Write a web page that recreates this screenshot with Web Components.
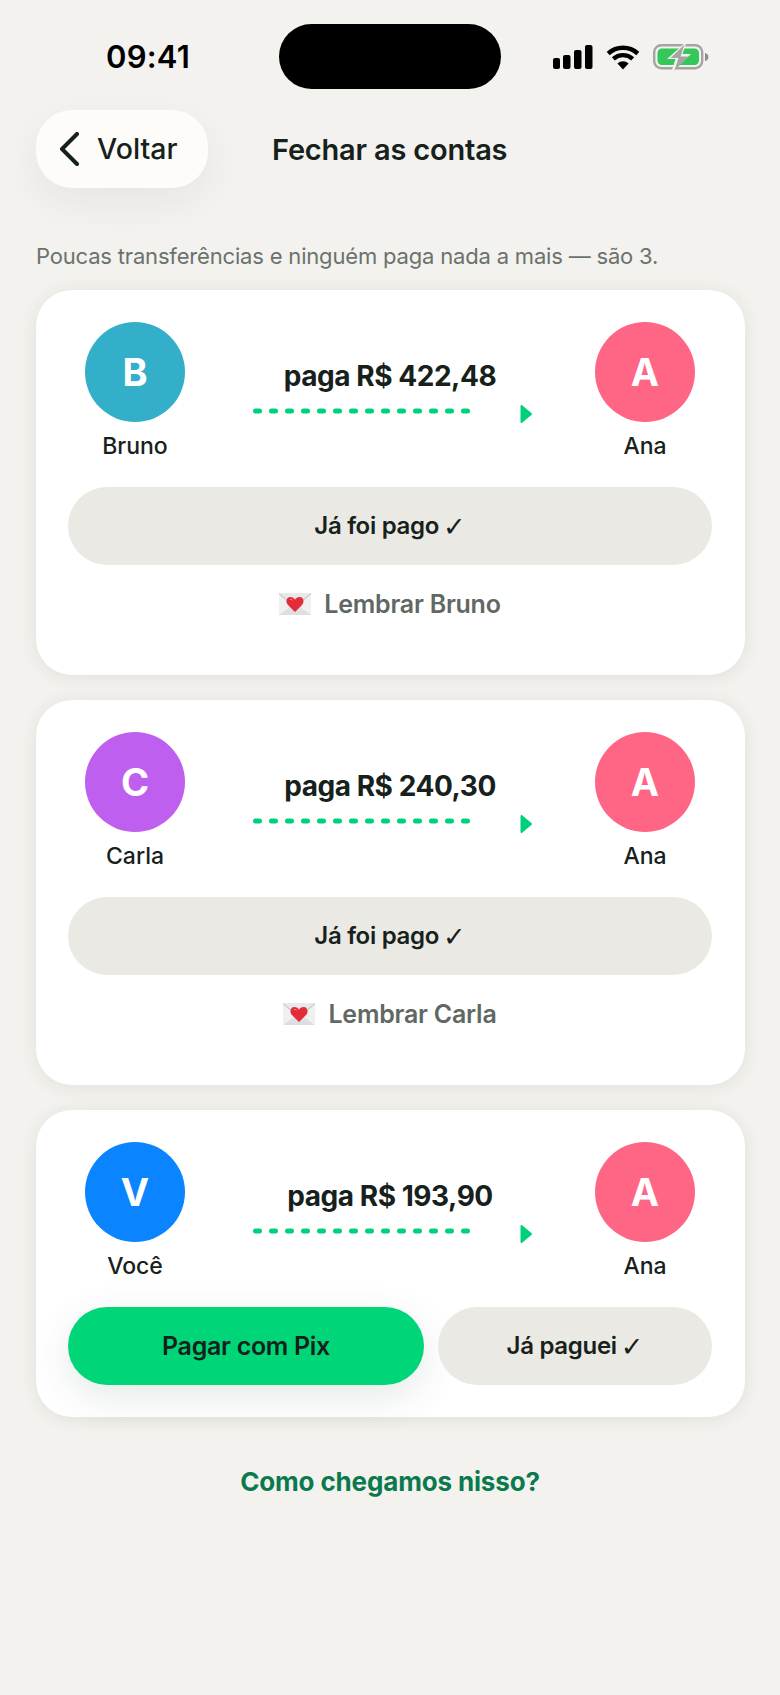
<!DOCTYPE html>
<html lang="pt-BR">
<head>
<meta charset="utf-8">
<title>Fechar as contas</title>
<style>
  html, body { margin: 0; padding: 0; background: #f3f2ee; }
  body { width: 780px; height: 1695px; overflow: hidden; font-family: Inter, "Liberation Sans", sans-serif; color: #17211c; }
</style>
</head>
<body>
<app-screen>
  <status-bar></status-bar>
  <top-nav title-text="Fechar as contas" back="Voltar"></top-nav>
  <p-intro>Poucas transferências e ninguém paga nada a mais — são 3.</p-intro>
  <transfer-card from="Bruno" initial="B" color="#33afca" amount="paga R$ 422,48">
    <pill-button>Já foi pago<check-mark></check-mark></pill-button>
    <remind-link>Lembrar Bruno</remind-link>
  </transfer-card>
  <transfer-card from="Carla" initial="C" color="#bf5ff0" amount="paga R$ 240,30">
    <pill-button>Já foi pago<check-mark></check-mark></pill-button>
    <remind-link>Lembrar Carla</remind-link>
  </transfer-card>
  <transfer-card from="Você" initial="V" color="#0a84ff" amount="paga R$ 193,90">
    <action-row>
      <pill-button primary style="flex:356 1 0">Pagar com Pix</pill-button>
      <pill-button style="flex:274 1 0">Já paguei<check-mark></check-mark></pill-button>
    </action-row>
  </transfer-card>
  <how-link>Como chegamos nisso?</how-link>
</app-screen>

<script>
function shadow(el, html) { el.attachShadow({ mode: 'open' }).innerHTML = html; }
function def(name, render) {
  customElements.define(name, class extends HTMLElement {
    connectedCallback() { if (!this.shadowRoot) shadow(this, render(this)); }
  });
}

def('app-screen', () => `<style>:host{display:block;width:780px;height:1695px;box-sizing:border-box}</style><slot></slot>`);

def('status-bar', () => `<style>
  :host{display:flex;align-items:center;box-sizing:border-box;height:89px;padding:24px 0 0 106px}
  .time{width:173px;font:600 31px/67px Inter,sans-serif;color:#000;letter-spacing:.2px}
  .island{width:222px;height:65px;border-radius:33px;background:#000;margin-right:52px}
  svg{display:block;margin-top:1px}
</style>
<span class="time">09:41</span><span class="island"></span>
<svg width="160" height="32" viewBox="553 41 160 32">
  <g fill="#000">
    <rect x="553" y="58" width="7" height="11" rx="2"/>
    <rect x="563" y="55" width="7.500" height="14" rx="2"/>
    <rect x="574" y="50" width="7.500" height="19" rx="2"/>
    <rect x="585" y="45" width="7.500" height="24" rx="2"/>
  </g>
  <g fill="none" stroke="#000" stroke-width="4.400">
    <path d="M608.200 53.500a22 22 0 0 1 29.600 0"/>
    <path d="M613.300 58.800a14.600 14.600 0 0 1 19.400 0"/>
  </g>
  <path d="M617.400 63.400a8.600 8.600 0 0 1 11.200 0L623 69.500z" fill="#000"/>
  <rect x="654.200" y="45.200" width="48" height="23" rx="7" fill="none" stroke="#a3a5a2" stroke-width="2.400"/>
  <path d="M705 53v8c2.200-.5 3.400-2 3.400-4s-1.200-3.500-3.400-4z" fill="#8d8f8c"/>
  <rect x="657.500" y="48.500" width="41.500" height="16.500" rx="4.500" fill="#34c759"/>
  <path d="M687 41 667 59h8.500l-4.500 14 20-19h-8.500z" fill="#f3f2ee"/>
  <path d="M684.500 44.500 670.500 58h8l-4 12.500 14-14h-8z" fill="#a4a6a3"/>
</svg>`);

def('top-nav', el => `<style>
  :host{display:flex;align-items:center;box-sizing:border-box;margin:21px 0 0 36px;height:78px}
  .back{display:flex;align-items:center;box-sizing:border-box;width:172px;height:78px;border-radius:36px;background:#fdfcf8;
        padding-left:23px;gap:18px;box-shadow:0 14px 40px rgba(40,40,30,.06);font:500 28.500px/1 Inter,sans-serif;color:#17211c}
  h1{margin:0 0 0 64px;font:600 29px/1 Inter,sans-serif;letter-spacing:-.2px;color:#17211c}
  svg{display:block}
</style>
<span class="back"><svg width="20" height="34" viewBox="0 0 20 34"><path d="M18 2 3 17l15 15" fill="none" stroke="#17211c" stroke-width="4" stroke-linecap="round" stroke-linejoin="round"/></svg>${el.getAttribute('back')}</span>
<h1>${el.getAttribute('title-text')}</h1>`);

def('p-intro', () => `<style>
  :host{display:block;margin:52px 0 18px 36px;font:400 22px/32px Inter,sans-serif;color:#6b716c;letter-spacing:-.18px}
</style><slot></slot>`);

def('person-avatar', el => `<style>
  :host{display:flex;flex-direction:column;align-items:center;width:100px}
  .c{width:100px;height:100px;border-radius:50%;display:flex;align-items:center;justify-content:center;
     background:${el.getAttribute('color')};color:#fff;font:700 38px/1 Inter,sans-serif}
  .n{margin-top:9px;font:500 23px/30px Inter,sans-serif;color:#17211c;white-space:nowrap}
</style><span class="c">${el.getAttribute('initial')}</span><span class="n">${el.getAttribute('name')}</span>`);

def('flow-arrow', () => `<style>:host{display:block}svg{display:block;overflow:visible}</style>
<svg width="282" height="22" viewBox="0 0 282 22">
  <line x1="6.500" y1="8" x2="222" y2="8" stroke="#00d07a" stroke-width="5" stroke-linecap="round" stroke-dasharray="4 12"/>
  <path d="M272.500 3 282 11 272.500 19z" fill="#00d07a" stroke="#00d07a" stroke-width="2" stroke-linejoin="round"/>
</svg>`);

def('transfer-card', el => `<style>
  :host{display:block;box-sizing:border-box;width:709px;margin:0 0 25px 36px;padding:32px 33px 32px 32px;border-radius:36px;background:#fff;
        box-shadow:0 2px 18px rgba(40,40,30,.09)}
  .row{display:flex;align-items:flex-start;padding:0 17px;height:165px}
  .mid{flex:1;display:flex;flex-direction:column;align-items:center;padding-top:31px;min-width:0}
  .amt{font:700 28px/46px Inter,sans-serif;color:#17211c;letter-spacing:-.45px;margin-bottom:4px;white-space:nowrap}
</style>
<div class="row">
  <person-avatar initial="${el.getAttribute('initial')}" name="${el.getAttribute('from')}" color="${el.getAttribute('color')}"></person-avatar>
  <div class="mid"><span class="amt">${el.getAttribute('amount')}</span><flow-arrow></flow-arrow></div>
  <person-avatar initial="A" name="Ana" color="#ff6685"></person-avatar>
</div>
<slot></slot>`);

def('action-row', () => `<style>:host{display:flex;gap:14px}</style><slot></slot>`);

def('pill-button', el => `<style>
  :host{display:flex;align-items:center;justify-content:center;box-sizing:border-box;height:78px;border-radius:39px;min-width:0;
        background:${el.hasAttribute('primary') ? '#00d678' : '#eae9e3'};
        ${el.hasAttribute('primary') ? 'box-shadow:0 12px 40px rgba(20,60,40,.11);' : ''}
        font:600 ${el.hasAttribute('primary') ? 25 : 24}px/1 Inter,sans-serif;color:#17211c;letter-spacing:-.3px;white-space:nowrap}
</style><slot></slot>`);

def('check-mark', () => `<style>:host{display:inline-block;margin-left:4px;font:400 27px/1 "DejaVu Sans",sans-serif;letter-spacing:0}</style>✓`);

def('remind-link', () => `<style>
  :host{display:flex;align-items:center;justify-content:center;gap:13px;height:78px;
        font:600 25px/1 Inter,sans-serif;color:#616863;letter-spacing:-.25px;white-space:nowrap}
  svg{display:block}
</style>
<svg width="32" height="22" viewBox="0 0 32 22">
  <defs><linearGradient id="e" x1="0" y1="0" x2="0" y2="1"><stop offset="0" stop-color="#e9eaeb"/><stop offset="1" stop-color="#dcdddf"/></linearGradient></defs>
  <rect width="32" height="22" rx="1" fill="url(#e)"/>
  <path d="M0 1 13 12.500 0 22zM32 1 19 12.500 32 22z" fill="#eff0f0"/>
  <path d="M0 0 16 13 32 0v1.200L16 14.500 0 1.200z" fill="#c6c7c9"/>
  <path d="M16 19 9 12C6.200 9.100 7.400 4 11.400 4c2 0 3.600 1 4.600 2.700C17 5 18.600 4 20.600 4c4 0 5.200 5.100 2.400 8z" fill="#e52b38"/>
  <path d="M10.500 6.500c1.200-.8 2.800-.3 3.300 1-1.300-.4-2.400-.4-3.300-1z" fill="#ff8a8f"/>
</svg><slot></slot>`);

def('how-link', () => `<style>
  :host{display:block;text-align:center;margin-top:46px;font:700 26px/38px Inter,sans-serif;color:#0a7a4e;letter-spacing:-.15px}
</style><slot></slot>`);
</script>
</body>
</html>
